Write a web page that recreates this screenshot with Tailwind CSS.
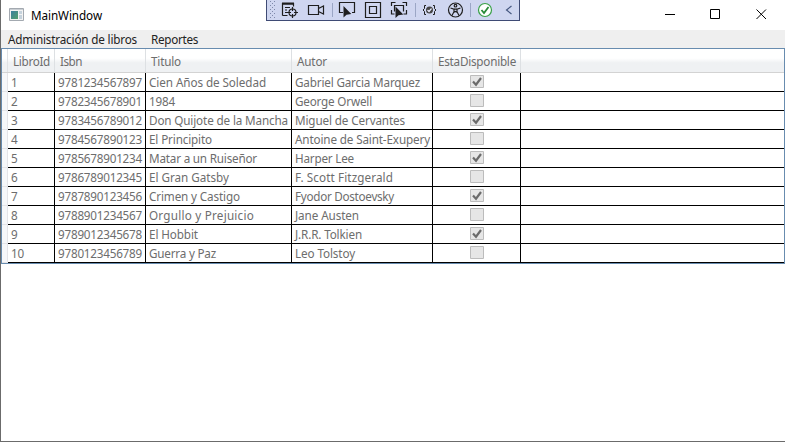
<!DOCTYPE html>
<html lang="es">
<head>
<meta charset="utf-8">
<title>MainWindow</title>
<script src="https://cdn.jsdelivr.net/npm/@tailwindcss/browser@4"></script>
</head>
<body class="relative flex h-[442px] w-[785px] flex-col overflow-hidden border-b border-l border-[#6b6b6b] bg-white font-['Noto_Sans','Open_Sans',sans-serif] text-[11.7px] leading-[18px] whitespace-nowrap">
<header class="flex h-[30px] shrink-0 items-center">
  <svg class="-mt-[2px] ml-2 h-[13px] w-[15px]" viewBox="0 0 15 13"><defs><linearGradient id="g" x2="1" y2="1"><stop stop-color="#3c7fa0"/><stop offset="1" stop-color="#53a06c"/></linearGradient></defs><path fill="#f3f3f3" stroke="#a3a9b0" d="M.5.5h14v12H.5z"/><path fill="#c9ced3" d="M1 1h13v1H1z"/><path fill="url(#g)" d="M2 3h7v8H2z"/><path fill="#c5d2dc" d="M10 3h3v3h-3zM10 7h3v4h-3z"/></svg>
  <span class="ml-[7px] text-black" data-w="71">MainWindow</span>
  <div class="ml-auto flex">
    <svg class="h-[30px] w-[46px]" viewBox="0 0 46 30"><path stroke="#000" d="M18 14.500h10"/></svg>
    <svg class="h-[30px] w-[46px]" viewBox="0 0 46 30"><path fill="none" stroke="#000" d="M17.500 9.500h9v9h-9z"/></svg>
    <svg class="h-[30px] w-[46px]" viewBox="0 0 46 30"><path stroke="#000" d="M17.500 9.500l9.500 9.500M27 9.500l-9.500 9.500"/></svg>
  </div>
</header>
<nav class="flex h-[18px] shrink-0 gap-[14px] bg-[#efefef] pl-[7px] leading-[19px] text-[#222]">
  <span data-w="129">Administración de libros</span><span data-w="47">Reportes</span>
</nav>
<main class="flex h-[216px] shrink-0 flex-col border border-[#688caf] text-[#6d6d6d]">
  <div class="flex h-[24px] shrink-0 border-b border-[#d3d3d3] bg-linear-to-b from-white from-40% to-[#eff1f3] to-60% leading-[25px]">
    <div class="w-[6px] border-r border-[#e0e2e5]"></div>
    <div class="w-[47px] border-r border-[#dde0e3] pl-[5px]"><span data-w="37">LibroId</span></div>
    <div class="w-[91px] border-r border-[#dde0e3] pl-[5px]"><span data-w="22">Isbn</span></div>
    <div class="w-[146px] border-r border-[#dde0e3] pl-[5px]"><span data-w="30">Titulo</span></div>
    <div class="w-[141px] border-r border-[#dde0e3] pl-[5px]"><span data-w="30">Autor</span></div>
    <div class="w-[88px] border-r border-[#dde0e3] pl-[5px]"><span data-w="78">EstaDisponible</span></div>
  </div>
  <div id="rows"></div>
</main>
<div class="absolute top-0 left-[265px] flex h-[21px] w-[254px] border-x border-b border-[#3f4b75] bg-[#cfd6f0]">
<svg class="h-[20px] w-[252px]" viewBox="267 0 252 20" fill="none" stroke="#1e1e1e" stroke-width="1.2">
  <g stroke="#7e89aa" stroke-width="1" stroke-dasharray="1 3"><path d="M270.500 1v18M274.500 1v18"/><path d="M272.500 3v16"/></g>
  <path d="M282.500 15.500V3.500h11v3M282.500 15.500h5M282 4h12M285 7.500h5M285 10h2M285 12.500h2"/><path stroke-width="2" d="M282 3.500h12"/>
  <circle cx="292.500" cy="12.500" r="3.500"/><path d="M292.500 7v4M292.500 14v4M287 12.500h4M294 12.500h4"/>
  <path d="M308.500 5.500h10v9h-10zM318.500 8.500l5-2.500v8l-5-2.500"/>
  <path stroke="#9ba6c5" stroke-width="1" d="M332.500 3v14M415.500 3v14M470.500 3v14"/>
  <path d="M343 12.500h-3.500v-10h15v10H352"/><path fill="#1e1e1e" stroke="none" d="M343.500 6v11.500l3-2.800 4.800-.7z"/>
  <path d="M365.500 2.500h15v15h-15zM369.500 6.500h7v7h-7z"/>
  <path d="M391.500 6V2.500h4M402.500 2.500h4V6M406.500 10v4h-3M391.500 10v4h3M394.500 11.500v-6h9v6"/><path fill="#1e1e1e" stroke="none" d="M395.500 6.500V18l3-2.800 4.800-.7z"/>
  <path stroke-width="1" d="M426 5.500h-1.500v3l-1.500 1.500 1.500 1.500v3h1.500M433 5.500h1.500v3l1.500 1.500-1.500 1.500v3H433"/><circle cx="429.500" cy="10" r="3.500" fill="#444" stroke="none"/><path stroke="#eef" d="M427.500 10l1.500 1.500 2.500-3"/>
  <circle cx="455.500" cy="10" r="7"/><circle cx="455.500" cy="5.700" r="1.300"/><path d="M450.500 8l3.500 1.200v2.500l-2 3.800M460.500 8L457 9.200v2.500l2 3.800M454 9.200h3M454 12.300l1.500-.8 1.500.8"/>
  <circle cx="485" cy="10" r="6.500" fill="#fff" stroke="#39a047"/><path stroke="#278a36" stroke-width="1.800" d="M481.500 10l2.500 3 4.500-6"/>
  <path stroke="#45577f" d="M511.500 6l-5 4 5 4"/>
</svg></div>
<script>
const books = [
 ['1','9781234567897','Cien Años de Soledad',117,'Gabriel Garcia Marquez',125],
 ['2','9782345678901','1984',26,'George Orwell',77],
 ['3','9783456789012','Don Quijote de la Mancha',139,'Miguel de Cervantes',110],
 ['4','9784567890123','El Principito',63,'Antoine de Saint-Exupery',135],
 ['5','9785678901234','Matar a un Ruiseñor',108,'Harper Lee',59],
 ['6','9786789012345','El Gran Gatsby',80,'F. Scott Fitzgerald',98],
 ['7','9787890123456','Crimen y Castigo',91,'Fyodor Dostoevsky',99],
 ['8','9788901234567','Orgullo y Prejuicio',105,'Jane Austen',64],
 ['9','9789012345678','El Hobbit',49,'J.R.R. Tolkien',67],
 ['10','9780123456789','Guerra y Paz',67,'Leo Tolstoy',60]];
document.getElementById('rows').innerHTML = books.map((b, i) => `
 <div class="flex h-[19px] leading-[19px]">
  <div class="w-[6px] border-r border-b border-[#e4e4e8] bg-[#f6f7f9]"></div>
  <div class="w-[47px] border-r border-b border-black pl-[3px]"><span data-w="${b[0].length * 6.5}">${b[0]}</span></div>
  <div class="w-[91px] border-r border-b border-black pl-[3px]"><span data-w="84">${b[1]}</span></div>
  <div class="w-[146px] border-r border-b border-black pl-[3px]"><span data-w="${b[3]}">${b[2]}</span></div>
  <div class="w-[141px] border-r border-b border-black pl-[3px]"><span data-w="${b[5]}">${b[4]}</span></div>
  <div class="flex w-[88px] justify-center border-r border-b border-black pt-[2px]"><svg class="h-[13px] w-[14px]" viewBox="0 0 14 13"><path fill="#e6e6e6" stroke="#bcbcbc" d="M.5.5h13v12H.5z"/>${i % 2 ? '' : '<path fill="none" stroke="#6b6b6b" stroke-width="2.200" d="M3 6.500l3 3.200L11 3"/>'}</svg></div>
  <div class="grow border-b border-black"></div>
 </div>`).join('');
function fit() {
  document.querySelectorAll('[data-w]').forEach(el => {
    let s = 0;
    for (let k = 0; k < 4; k++) {
      s += (el.dataset.w - el.getBoundingClientRect().width) / el.textContent.length;
      el.style.letterSpacing = s + 'px';
    }
  });
}
window.addEventListener('load', () => {
  document.querySelectorAll('[data-w]').forEach(el => el.style.letterSpacing = '');
  fit();
});
</script>
</body>
</html>
